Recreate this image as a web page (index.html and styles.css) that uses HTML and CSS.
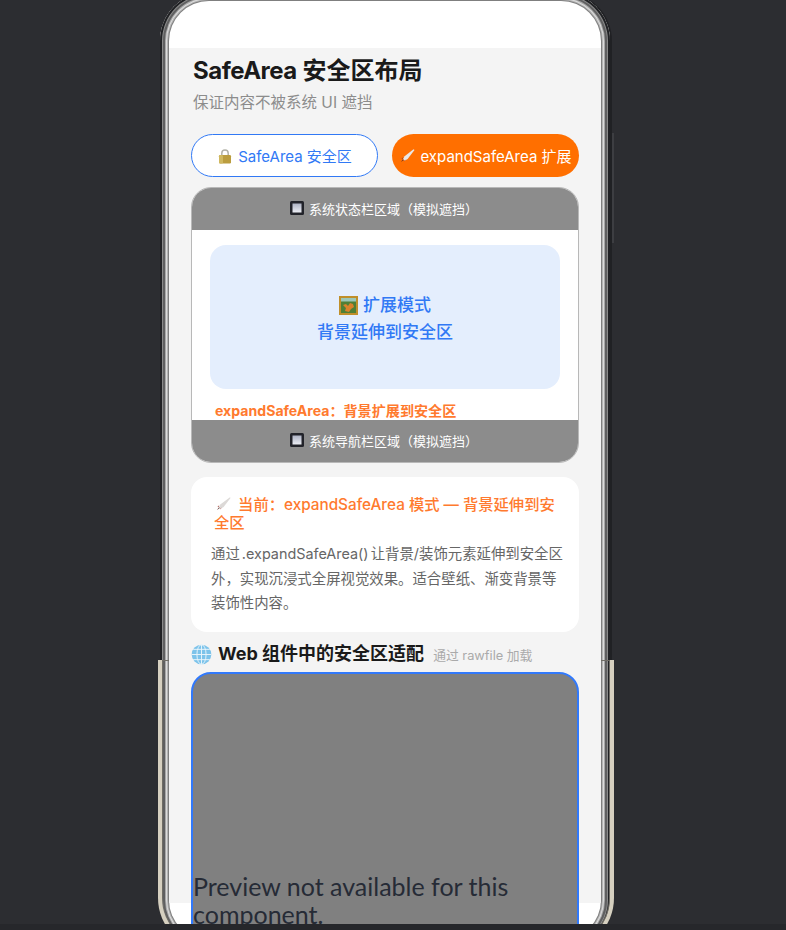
FILE: index.html
```html
<!DOCTYPE html>
<html lang="zh">
<head>
<meta charset="utf-8">
<title>SafeArea</title>
<link rel="stylesheet" href="styles.css">
</head>
<body>
<div class="stage">
  <div class="device">
    <span class="rail"></span>
    <span class="side-key"></span>
    <div class="screen">
      <main class="content">
        <h1 class="title"><span class="tight">SafeArea</span> 安全区布局</h1>
        <p class="subtitle">保证内容不被系统 UI 遮挡</p>
        <div class="tabs">
          <button class="tab tab-safe">
            <svg class="ico" viewBox="0 0 16 16"><path d="M4.800 8V5.200a3.200 3.200 0 0 1 6.400 0V8" fill="none" stroke="#b3b2a8" stroke-width="1.500"/><rect x="2" y="7" width="12" height="8.500" rx="1.200" fill="#bb9d3f"/><rect x="2" y="7" width="4" height="8.500" rx="1.200" fill="#d0b85f"/></svg>
            SafeArea 安全区
          </button>
          <button class="tab tab-expand">
            <svg class="ico" viewBox="0 0 16 16"><path d="M14.500 1.200 5.600 8.200 4 11.200l1.600 1.600 3-1.700 6.900-9z" fill="#e9e6e4"/><path d="M4 11.200 2 14l2.800-1.900z" fill="#5a2f2a"/><path d="M4.300 9.300 2.400 10.800l1.200.3zM6.700 11.600l-1.400 2 .1-1.200z" fill="#8f3b33"/></svg>
            expandSafeArea 扩展
          </button>
        </div>
        <section class="demo">
          <div class="sysbar">
            <svg class="ico-btn" viewBox="0 0 14 14"><defs><linearGradient id="btnA" x1="0" y1="0" x2="0" y2="1"><stop offset="0" stop-color="#aeb3c4"/><stop offset="1" stop-color="#eceef4"/></linearGradient></defs><rect width="14" height="14" rx="1.500" fill="#22232a"/><rect x="2.500" y="2.500" width="9" height="9" fill="url(#btnA)"/></svg>
            系统状态栏区域（模拟遮挡）
          </div>
          <div class="demo-body">
            <div class="hero">
              <div class="hero-line">
                <svg class="ico-pic" viewBox="0 0 19 19"><rect width="19" height="19" fill="#c08f2a"/><rect x="2" y="2" width="15" height="15" fill="#4f7f36"/><rect x="2" y="2" width="15" height="3.500" fill="#9cc7b8"/><path d="M4 9l3-1 2 2 2-3 3 1 1 3-3 2-2 3-4-1 1-3z" fill="#d9822b"/></svg>
                扩展模式
              </div>
              <div class="hero-line">背景延伸到安全区</div>
            </div>
            <p class="demo-note">expandSafeArea：背景扩展到安全区</p>
          </div>
          <div class="sysbar">
            <svg class="ico-btn" viewBox="0 0 14 14"><defs><linearGradient id="btnB" x1="0" y1="0" x2="0" y2="1"><stop offset="0" stop-color="#aeb3c4"/><stop offset="1" stop-color="#eceef4"/></linearGradient></defs><rect width="14" height="14" rx="1.500" fill="#22232a"/><rect x="2.500" y="2.500" width="9" height="9" fill="url(#btnB)"/></svg>
            系统导航栏区域（模拟遮挡）
          </div>
        </section>
        <section class="info">
          <h2 class="info-title"><svg class="ico-inline" viewBox="0 0 16 16"><path d="M15 1.200 5.600 8.200 4 11.200l1.600 1.600 3-1.700 6.900-9z" fill="#dcd9d7"/><path d="M4 11.200 2 14l2.800-1.900z" fill="#5a2f2a"/><path d="M4.300 9.300 2.400 10.800l1.200.3zM6.700 11.600l-1.400 2 .1-1.200z" fill="#a3453b"/></svg> 当前：expandSafeArea 模式 — 背景延伸到安全区</h2>
          <p class="info-text">通过 .expandSafeArea() 让背景/装饰元素延伸到安全区外，实现沉浸式全屏视觉效果。适合壁纸、渐变背景等装饰性内容。</p>
        </section>
        <div class="web-head">
          <svg class="ico-globe" viewBox="0 0 22 22"><circle cx="11" cy="11" r="10.300" fill="#7cc3ea"/><g fill="none" stroke="#e8f4fb" stroke-width="1"><ellipse cx="11" cy="11" rx="4.800" ry="10.300"/><path d="M11 .7v20.600M.7 11h20.600M2.300 5.600h17.400M2.300 16.400h17.400"/></g></svg>
          <h2 class="web-title">Web 组件中的安全区适配</h2>
          <span class="web-sub">通过 rawfile 加载</span>
        </div>
        <div class="web-box">
          <p class="preview">Preview not available for this component.</p>
        </div>
      </main>
    </div>
    <div class="floor"></div>
  </div>
</div>
</body>
</html>
```

FILE: styles.css
```css
* { box-sizing: border-box; }
html, body { margin: 0; height: 930px; overflow: hidden; background: #2c2d31; }
body { font-family: "Inter", "Noto Sans CJK SC", sans-serif; }
.stage { height: 930px; overflow: hidden; }
.device {
  position: relative;
  width: 450px;
  height: 957px;
  margin: -8px 0 0 160px;
  padding: 9px;
  border-radius: 49px;
  background: #7f7f7f;
  box-shadow:
    inset 0 0 0 2px #202124,
    inset 0 0 0 3px #8a8a8a,
    inset 0 0 0 5px #5f5f60,
    inset 0 0 0 6px #a8a8a8,
    inset 0 0 0 7px #dcdcdc,
    inset 0 0 0 8px #b4b4b4,
    2px 0 0 0 #202124;
}
.rail {
  position: absolute;
  top: 668px; bottom: -2px; left: -2px; right: -4px;
  border: 4px solid #d6d0c0;
  border-top: 0;
  border-radius: 0 0 53px 53px;
  box-shadow: inset 0 0 0 1px #6f6c65;
}
.side-key { position: absolute; top: 141px; right: -4px; width: 2px; height: 110px; background: #3d3e42; }
.floor { position: absolute; top: 932px; left: -160px; right: -176px; height: 6px; background: #26272b; }
.screen {
  position: relative;
  height: 939px;
  padding-top: 47px;
  overflow: hidden;
  border-radius: 40px;
  background: #fff;
}
.content { height: 855px; padding: 0 22px; background: #f4f4f4; }
.title { margin: 0; padding: 5px 0 0 2px; font-size: 24px; line-height: 36px; font-weight: 700; color: #1a1a1a; }
.tight { letter-spacing: -.5px; }
.subtitle { margin: 0; padding: 3px 0 0 2px; font-size: 15.500px; line-height: 22px; color: #8c8c8c; }
.tabs { display: flex; gap: 14px; margin-top: 20px; }
.tab {
  flex: 0 0 187px;
  height: 43px;
  display: flex; align-items: center; justify-content: center; gap: 5px;
  border-radius: 22px;
  font: 400 15px "Inter", "Noto Sans CJK SC", sans-serif;
  white-space: nowrap;
  padding: 0;
}
.tab-safe { background: #fff; border: 1px solid #3179f5; color: #3179f5; }
.tab-expand { background: #ff6f00; border: 0; color: #fff; }
.ico { width: 16px; height: 16px; flex: none; }
.demo {
  margin-top: 10px;
  height: 276px;
  border: 1px solid #b8b8b8;
  border-radius: 20px;
  overflow: hidden;
  background: #fff;
  display: flex; flex-direction: column;
}
.sysbar {
  height: 42px;
  flex: none;
  padding: 0 2px 2px 0;
  display: flex; align-items: center; justify-content: center; gap: 5px;
  background: #8c8c8c;
  color: #fff;
  font-size: 13px;
}
.ico-btn { width: 14px; height: 14px; flex: none; }
.demo-body { flex: 1; padding: 15px 18px 0; overflow: hidden; }
.hero {
  height: 144px;
  padding-top: 4px;
  border-radius: 16px;
  background: #e4eefd;
  display: flex; flex-direction: column; align-items: center; justify-content: center;
  color: #3179f5;
  font-size: 17px;
  font-weight: 500;
  line-height: 27px;
}
.hero-line { display: flex; align-items: center; gap: 5px; }
.ico-pic { width: 19px; height: 19px; flex: none; }
.demo-note { margin: 13px 0 0 5px; font-size: 14.100px; line-height: 18px; font-weight: 700; color: #ff7a2e; }
.info {
  margin-top: 14px;
  height: 155px;
  padding: 19px 20px 0;
  border-radius: 16px;
  background: #fff;
}
.info-title { margin: 0 0 0 3px; font-size: 15.300px; line-height: 18px; font-weight: 500; color: #ff7a2e; }
.ico-inline { width: 16px; height: 16px; margin: 0 3px 0 1px; vertical-align: -2px; }
.info-text { margin: 10px -6px 0 0; font-size: 14.400px; line-height: 24.500px; word-spacing: -2px; color: #666; }
.web-head { display: flex; align-items: center; margin-top: 11px; height: 22px; }
.ico-globe { width: 21px; height: 21px; flex: none; }
.web-title { margin: 0 0 0 6px; font-size: 18px; line-height: 22px; font-weight: 700; color: #1a1a1a; }
.web-sub { margin-left: 9px; font-size: 12.800px; color: #aaa; }
.web-box {
  margin-top: 7px;
  height: 280px;
  padding-top: 198px;
  border: 2px solid #3179fb;
  border-radius: 20px;
  background: #808080;
}
.preview { margin: 0; font-family: "Lato", sans-serif; font-size: 25px; line-height: 28px; color: #262b36; }
```
